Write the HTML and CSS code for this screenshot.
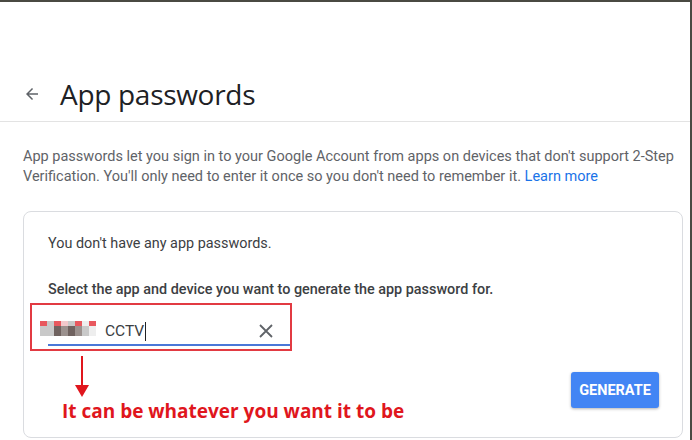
FILE: index.html
```html
<!DOCTYPE html>
<html lang="en">
<head>
    <meta charset="UTF-8">
    <meta name="viewport" content="width=device-width, initial-scale=1.0">
    <title>App passwords</title>
    <link rel="stylesheet" href="styles.css">
</head>
<body>
    <div class="page">
        <header class="page-header">
            <svg class="back-arrow" width="18" height="18" viewBox="0 0 24 24">
                <path d="M20 11H7.83l5.59-5.59L12 4l-8 8 8 8 1.41-1.41L7.83 13H20v-2z" fill="#5f6368"/>
            </svg>
            <h1>App passwords</h1>
        </header>

        <section class="content">
            <p class="intro">
                App passwords let you sign in to your Google Account from apps on devices that don't support 2-Step<br>
                Verification. You'll only need to enter it once so you don't need to remember it.
                <a href="#">Learn more</a>
            </p>

            <div class="card">
                <p class="empty">You don't have any app passwords.</p>
                <p class="select-label">Select the app and device you want to generate the app password for.</p>

                <div class="field-box">
                    <div class="field">
                        <!-- blurred device name -->
                        <div class="blur">
                            <span class="r"></span><span class="g1"></span><span class="r"></span><span class="p"></span><span class="g1"></span><span class="r"></span><span class="g0"></span><span class="r"></span>
                            <span class="g1"></span><span class="g1"></span><span class="g3"></span><span class="g2"></span><span class="g3"></span><span class="g2"></span><span class="g1"></span><span class="g0"></span>
                        </div>
                        <span class="value">CCTV<span class="caret"></span></span>
                        <svg class="clear" width="16" height="16" viewBox="0 0 16 16">
                            <path d="M2 2L14 14M14 2L2 14" stroke="#5f6368" stroke-width="1.8"/>
                        </svg>
                    </div>
                </div>

                <div class="bottom-row">
                    <div class="note">
                        <svg class="note-arrow" width="20" height="42" viewBox="0 0 20 42">
                            <path d="M10 0V30" stroke="#e0161d" stroke-width="2"/>
                            <path d="M3 29L17 29L10 41Z" fill="#e0161d"/>
                        </svg>
                        <p class="note-text">It can be whatever you want it to be</p>
                    </div>
                    <button class="generate">GENERATE</button>
                </div>
            </div>
        </section>
    </div>
</body>
</html>
```

FILE: styles.css
```css
body {
    margin: 0;
    font-family: Roboto, 'Liberation Sans', sans-serif;
    background-color: #fff;
    color: #3c4043;
}

.page {
    height: 438px;
    border-top: 2px solid #4a4a42;
    border-right: 2px solid #4a4a42;
    overflow: hidden;
}

.page-header {
    display: flex;
    align-items: center;
    height: 120px;
    padding: 64px 0 0 23px;
    box-sizing: border-box;
    border-bottom: 1px solid #e3e3e3;
}

.back-arrow {
    margin-right: 19px;
}

h1 {
    margin: 0;
    font-family: 'Open Sans', sans-serif;
    font-weight: 400;
    font-size: 28px;
    letter-spacing: -0.3px;
    color: #202124;
}

.content {
    padding: 0 0 0 23px;
}

.intro {
    margin: 25px 0 0 0;
    font-size: 14.5px;
    line-height: 20px;
    color: #5f6368;
    width: 662px;
}

.intro a {
    color: #1a73e8;
    text-decoration: none;
}

.card {
    margin-top: 24px;
    width: 660px;
    height: 227px;
    border: 1px solid #dadce0;
    border-radius: 8px;
    padding: 23px 0 0 24px;
    box-sizing: border-box;
}

.empty {
    margin: 0;
    font-size: 14.4px;
    color: #3c4043;
}

.select-label {
    margin: 29px 0 0 0;
    font-size: 14.4px;
    font-weight: 500;
    color: #3c4043;
}

.field-box {
    margin: 5px 0 0 -18px;
    width: 258px;
    height: 44px;
    border: 2px solid #e23a42;
}

.field {
    position: relative;
    display: flex;
    align-items: center;
    margin: 13px 0 0 16px;
    width: 242px;
    height: 28px;
    border-bottom: 2px solid #4a78d8;
    box-sizing: border-box;
}

.blur {
    position: absolute;
    left: -8px;
    top: 3px;
    display: grid;
    grid-template-columns: repeat(8, 7px);
    grid-template-rows: 5px 10px;
}

.blur .r { background: #e8585e; }
.blur .p { background: #f3c9cc; }
.blur .g0 { background: #eeeeee; }
.blur .g1 { background: #c9c9c9; }
.blur .g2 { background: #9b918e; }
.blur .g3 { background: #6f625f; }

.value {
    margin-left: 57px;
    font-size: 15.5px;
    color: #3c4043;
    display: flex;
    align-items: center;
}

.caret {
    display: inline-block;
    width: 1px;
    height: 19px;
    background: #202124;
    margin-left: 1px;
}

.clear {
    margin-left: auto;
    margin-right: 16px;
}

.bottom-row {
    display: flex;
    justify-content: space-between;
    align-items: flex-start;
    padding-right: 23px;
}

.note {
    margin-left: 14px;
    display: flex;
    flex-direction: column;
}

.note-arrow {
    margin-left: 10px;
    margin-top: 5px;
}

.note-text {
    margin: 0;
    font-family: 'Open Sans', sans-serif;
    font-weight: 700;
    font-size: 19px;
    color: #e0161d;
}

.generate {
    margin-top: 21px;
    background-color: #4285f4;
    color: white;
    border: none;
    border-radius: 3px;
    width: 88px;
    height: 36px;
    font-family: Roboto, sans-serif;
    font-weight: 700;
    font-size: 14.5px;
    box-shadow: 0 1px 3px rgba(0, 0, 0, 0.3);
}
```
